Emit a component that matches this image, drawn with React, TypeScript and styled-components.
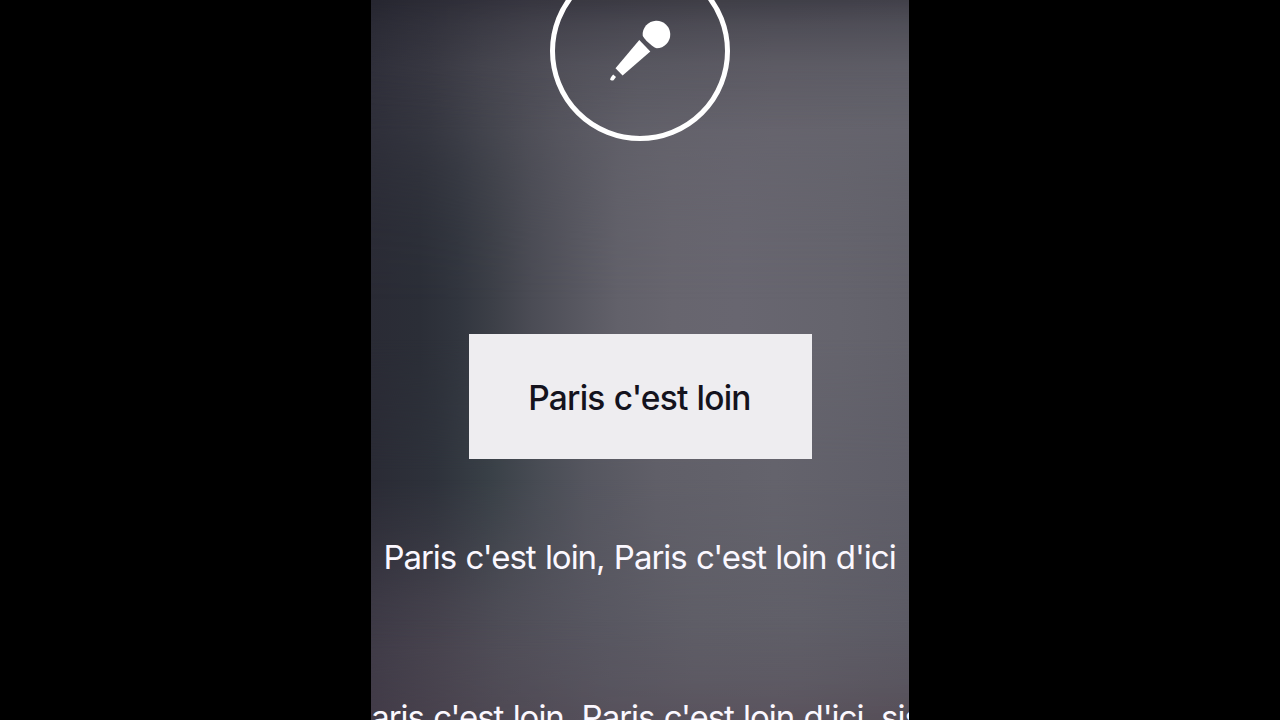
import styled, { createGlobalStyle } from "styled-components";

const GlobalStyle = createGlobalStyle`
  body {
    background: #000;
    margin: 0;
    overflow: hidden;
  }
`
const Wrapper = styled.div`
  background: #000;
  display: flex;
  height: 100vh;
  justify-content: center;
  overflow: hidden;
`
const Screen = styled.main`
  align-items: center;
  background: linear-gradient(90deg, #2a2b35 0%, #2b2e37 9%, #31353e 16%, #3d4048 23%, #4b4c55 30%, #575760 38%, #62616a 46%, #67656e 56%, #686670 68%, #65646d 87%, #62616a 100%);
  display: flex;
  flex-direction: column;
  font-family: Inter, "Liberation Sans", sans-serif;
  height: 720px;
  isolation: isolate;
  overflow: hidden;
  position: relative;
  width: 538px;
`
// the backdrop is the blurred cover, lighter on top and warmer at the bottom
const Shade = styled.div<{ $colors: string; $mask: string }>`
  background: linear-gradient(90deg, ${({ $colors }) => $colors});
  inset: 0;
  mask-image: linear-gradient(180deg, ${({ $mask }) => $mask});
  position: absolute;
  z-index: -1;
`
const Badge = styled.div`
  border: 5px solid #fff;
  border-radius: 50%;
  box-sizing: border-box;
  flex: none;
  height: 180px;
  margin-top: -39px;
  padding: 45px;
  width: 180px;
`
const Mic = styled.svg`
  display: block;
  fill: #fff;
  height: 80px;
  margin-top: -1px;
  width: 80px;
`
const Highlight = styled.div`
  align-items: center;
  background: #eeedf0;
  box-sizing: border-box;
  color: #14131d;
  display: flex;
  flex: none;
  height: 125px;
  justify-content: center;
  margin-top: 193px;
  padding-top: 3px;
  width: 343px;
`
const Line = styled.p<{ $active?: boolean }>`
  color: ${({ $active }) => ($active ? "#14131d" : "#fbf8ff")};
  flex: none;
  font-size: ${({ $active }) => ($active ? "33.5px" : "33px")};
  font-weight: ${({ $active }) => ($active ? 500 : 400)};
  letter-spacing: ${({ $active }) => ($active ? "-0.8px" : "-1.02px")};
  line-height: 40px;
  margin: 0 1px 0 0;
  white-space: nowrap;
  word-spacing: 1px;
`
const Upcoming = styled.div`
  align-items: center;
  display: flex;
  flex: none;
  flex-direction: column;
  gap: 120px;
  margin-top: 78px;
`

const lyrics = [
  "Paris c'est loin, Paris c'est loin d'ici",
  "Paris c'est loin, Paris c'est loin d'ici, sisi",
];

const Backdrop = () => (
  <>
    <Shade
      $colors="#32323d 0%, #3b3b45 11%, #494952 21%, #57565f 35%, #605f68 50%, #65636c 75%, #65646d 100%"
      $mask="#000 0, #000 70px, rgba(0, 0, 0, 0.75) 110px, rgba(0, 0, 0, 0.35) 170px, rgba(0, 0, 0, 0.12) 230px, transparent 300px"
    />
    <Shade
      $colors="#2a2b35 0%, #2e323b 12%, #394047 22%, #484c54 31%, #55565f 40%, #605f68 53%, #64636c 75%, #5f5e68 100%"
      $mask="transparent 340px, #000 470px"
    />
    <Shade
      $colors="#403c48 0%, #48444f 12%, #504e58 24%, #585761 42%, #5f5e67 60%, #605f68 80%, #5c5b65 100%"
      $mask="transparent 480px, rgba(0, 0, 0, 0.3) 530px, rgba(0, 0, 0, 0.8) 600px, #000 650px"
    />
    <Shade
      $colors="#433b48 0%, #4d4651 20%, #564f5a 45%, #59505b 75%, #554b54 100%"
      $mask="transparent 620px, rgba(0, 0, 0, 0.3) 680px, #000 740px"
    />
    <Shade
      $colors="#262630 0%, #373640 30%, #3f3e47 65%, #42414a 100%"
      $mask="#000 0, rgba(0, 0, 0, 0.6) 25px, rgba(0, 0, 0, 0.22) 65px, transparent 130px"
    />
  </>
)

const App = () => {
  return(
    <Wrapper>
      <GlobalStyle/>
      <Screen>
        <Backdrop/>
        <Badge>
          <Mic viewBox="0 0 80 80">
            <path d="M42.7 25.3A13.8 13.8 0 1 1 56.7 38.3C53.5 38 42.9 28.5 42.7 25.3Z"/>
            <path d="M39.3 30L50.3 41.4L22.6 65.5L15.5 58.3Z"/>
            <path d="M13.2 64.4L16 67L13.6 70.2Q11.3 71.2 10.2 69.8Q9.7 68.2 13.2 64.4Z"/>
          </Mic>
        </Badge>
        <Highlight>
          <Line $active>Paris c'est loin</Line>
        </Highlight>
        <Upcoming>
          {lyrics.map((text) => <Line key={text}>{text}</Line>)}
        </Upcoming>
      </Screen>
    </Wrapper>
  )
}
export default App
